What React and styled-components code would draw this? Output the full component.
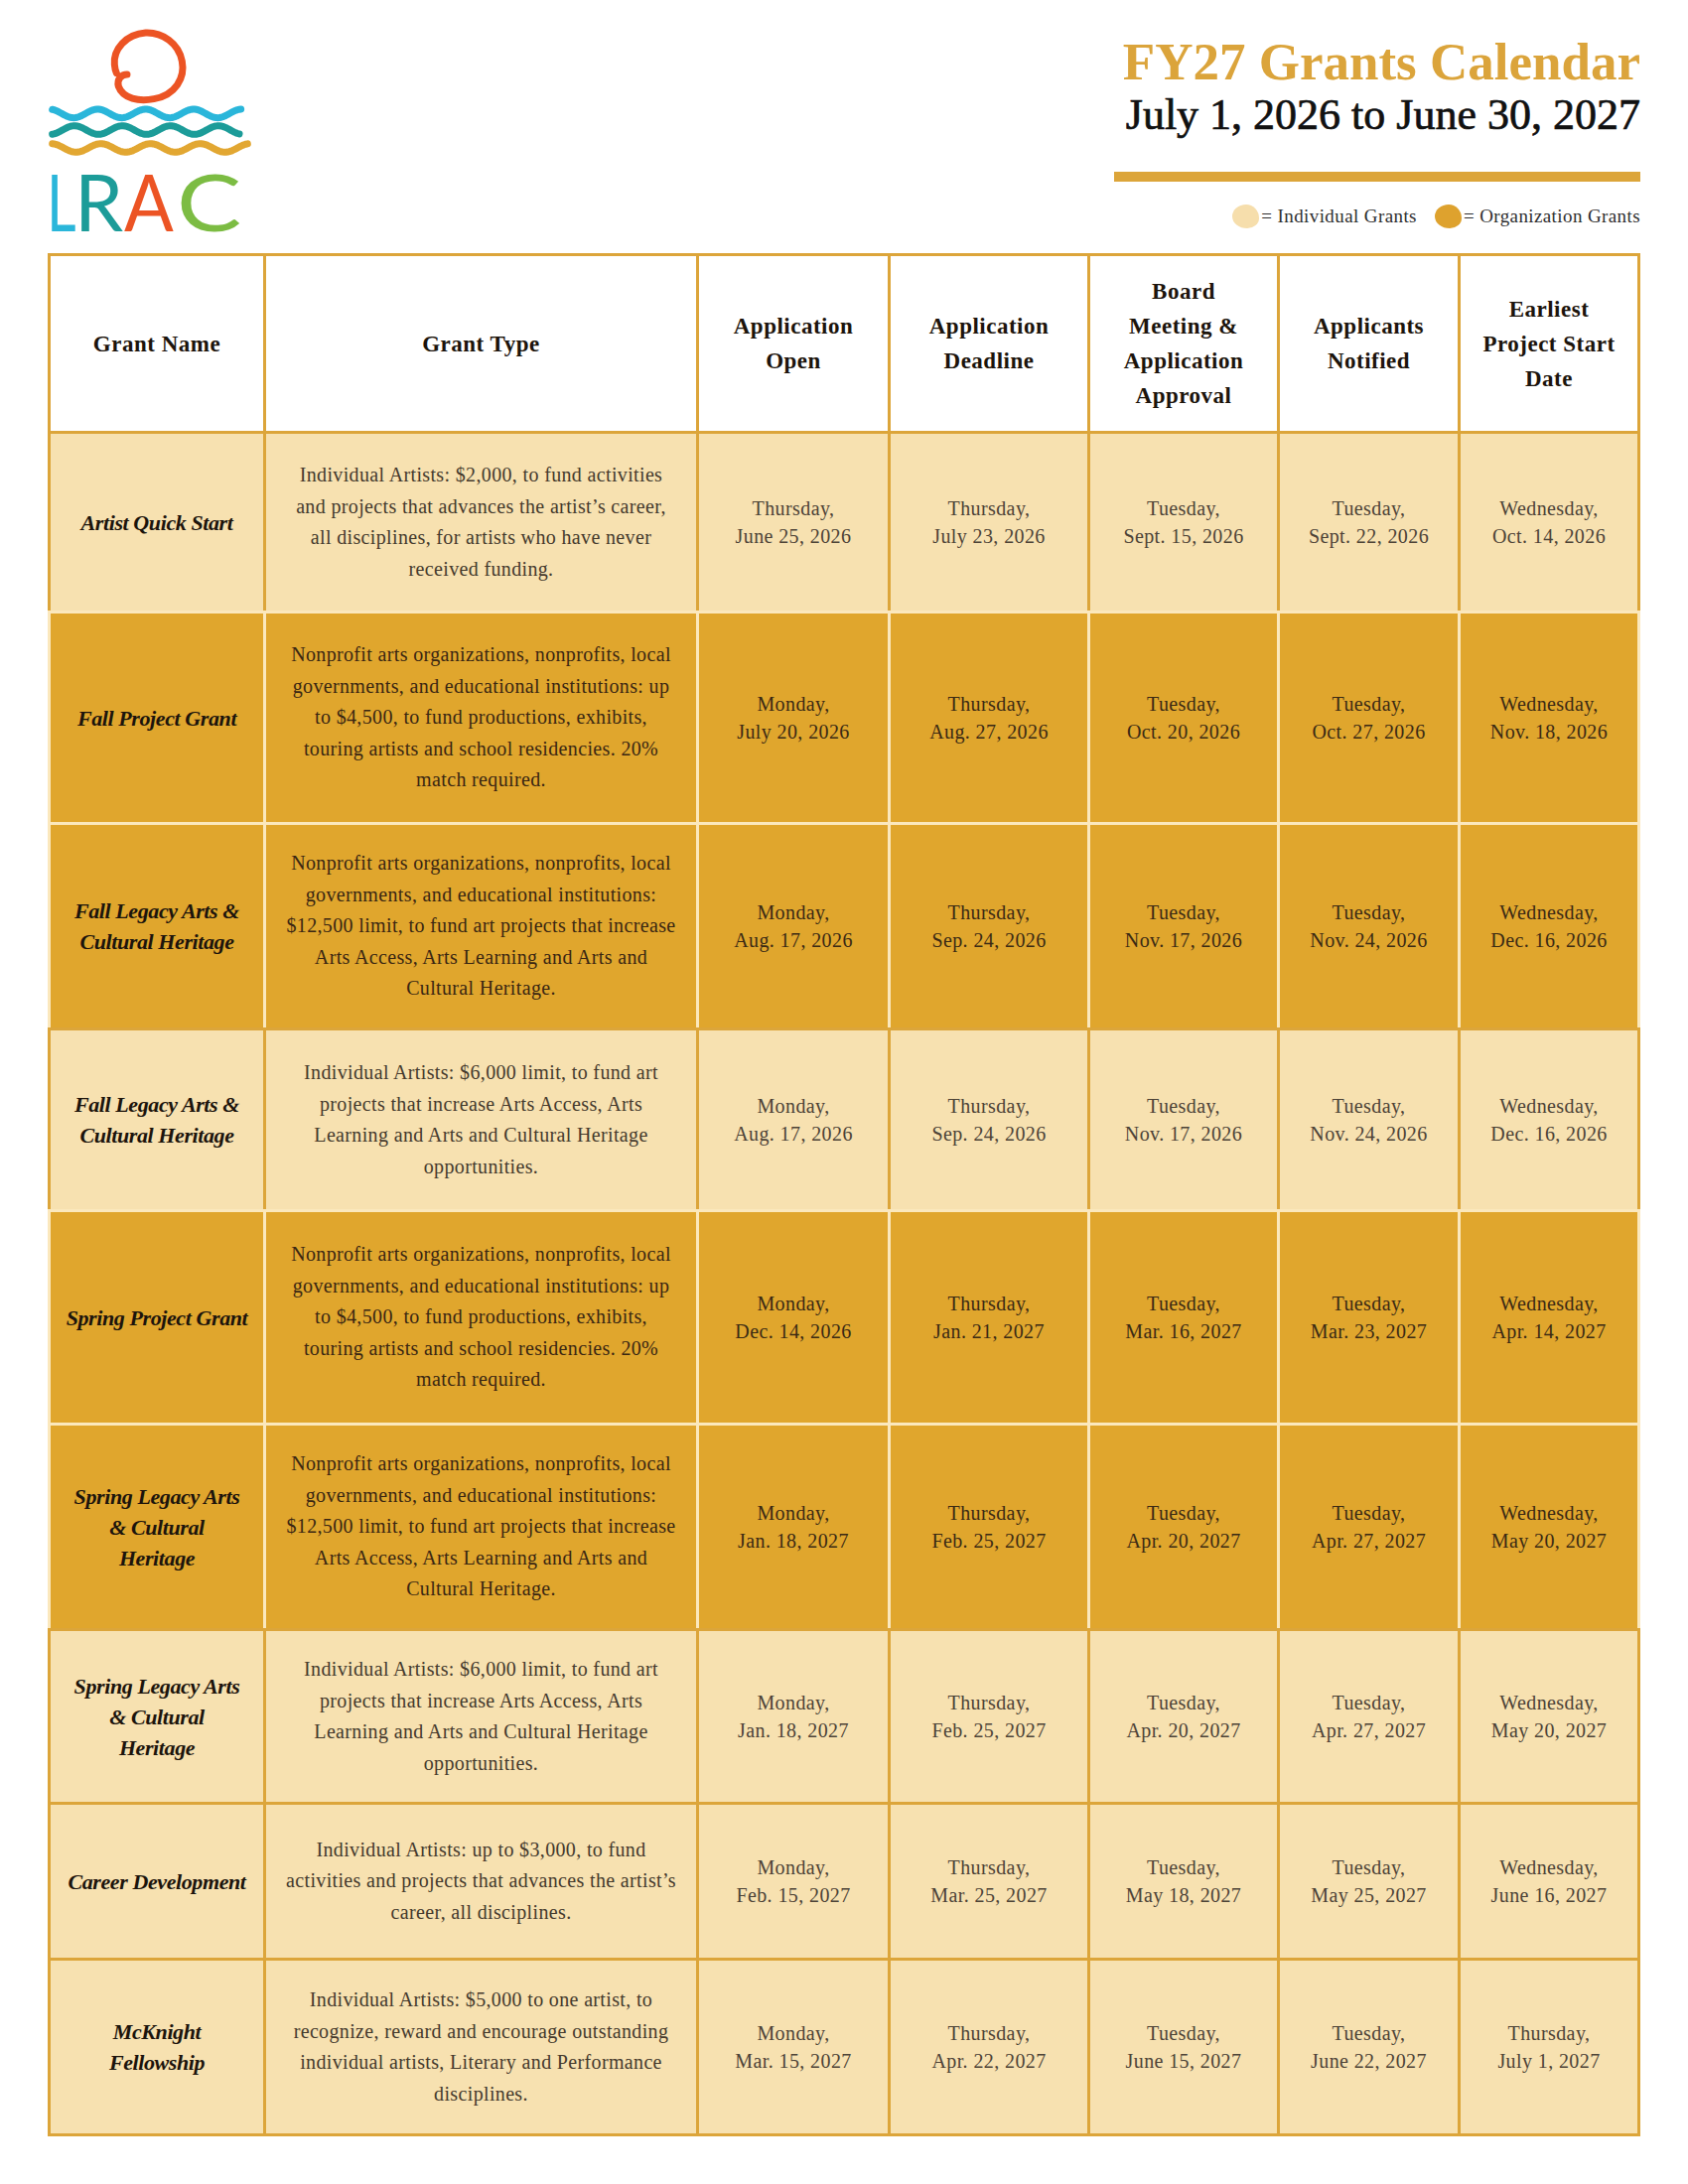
import React from 'react';
import styled, { createGlobalStyle } from 'styled-components';

const colours = {
	gold: '#dca53a',
	title: '#dba43b',
	light: '#f7e1b0',
	dark: '#e0a62d',
	cream: '#fbe8bd',
	ink: '#1c140c',
	body: '#453a2d',
	bodyDark: '#3a2612',
};

const GlobalStyle = createGlobalStyle`
	html, body {
		margin: 0;
		padding: 0;
		background: #ffffff;
	}
	body {
		font-family: 'Liberation Serif', 'DejaVu Serif', serif;
		color: ${colours.ink};
	}
`;

const Page = styled.div`
	width: 1700px;
	height: 2200px;
	box-sizing: border-box;
	padding: 0 48px;
	background: #ffffff;
`;

const Header = styled.header`
	display: flex;
	justify-content: space-between;
	align-items: flex-start;
	height: 245px;
`;

const LogoBox = styled.div`
	display: flex;
	flex-direction: column;
	width: 230px;
	margin: 25px 0 0 -8px;
`;

const LogoMark = styled.svg`
	display: block;
	width: 230px;
	height: 150px;
`;

const LogoWord = styled.div`
	margin: -2px 0 0 7px;
	font-family: Lato, 'Open Sans', sans-serif;
	font-size: 80px;
	line-height: 58px;
	font-weight: 400;
	white-space: nowrap;
`;

const Letter = styled.span`
	display: inline-block;
	width: ${p => p.$w}px;
	color: ${p => p.$c};
	transform: scaleX(${p => p.$sx});
	transform-origin: left center;
`;

const TitleBlock = styled.div`
	width: 530px;
	padding-top: 32px;
	display: flex;
	flex-direction: column;
	align-items: flex-end;
	text-align: right;
`;

const Title = styled.h1`
	margin: 0;
	font-size: 53px;
	line-height: 60px;
	font-weight: 700;
	color: ${colours.title};
	white-space: nowrap;
`;

const Period = styled.h2`
	margin: 0;
	font-size: 44px;
	line-height: 48px;
	font-weight: 400;
	color: #111111;
	white-space: nowrap;
	-webkit-text-stroke: 0.7px #111111;
`;

const Rule = styled.div`
	align-self: stretch;
	height: 10px;
	margin-top: 33px;
	background: ${colours.gold};
`;

const Legend = styled.div`
	display: flex;
	align-items: center;
	gap: 18px;
	margin-top: 23px;
	font-size: 19px;
	letter-spacing: 0.4px;
	color: #2f2f2f;
`;

const LegendItem = styled.div`
	display: flex;
	align-items: center;
	gap: 2px;
`;

const Blob = styled.span`
	display: inline-block;
	width: 27px;
	height: 24px;
	background: ${p => p.$tone};
	border-radius: 52% 48% 44% 56% / 50% 58% 42% 50%;
`;

const Table = styled.div`
	display: flex;
	flex-direction: column;
	margin-top: 10px;
`;

const Row = styled.div`
	display: grid;
	grid-template-columns: 217px 436px 193px 201px 191px 182px 184px;
	height: ${p => p.$h}px;
	background: ${p => p.$bg};
`;

const Cell = styled.div`
	box-sizing: border-box;
	display: flex;
	align-items: center;
	justify-content: center;
	text-align: center;
	padding: 0 6px;
	border-top: 3px solid ${p => p.$line};
	border-left: 3px solid ${p => p.$line};
	&:last-child {
		border-right: 3px solid ${p => p.$line};
	}
	${p => p.$last && `border-bottom: 3px solid ${p.$line};`}
`;

const HeadText = styled.div`
	font-size: 23px;
	line-height: 35px;
	font-weight: 700;
	letter-spacing: 0.5px;
	color: ${colours.ink};
	white-space: nowrap;
`;

const NameText = styled.div`
	font-size: 22px;
	line-height: 31px;
	font-weight: 700;
	font-style: italic;
	letter-spacing: -0.4px;
	color: ${colours.ink};
	white-space: nowrap;
`;

const TypeText = styled.div`
	font-size: 20px;
	line-height: 31.5px;
	letter-spacing: 0.35px;
	color: ${p => (p.$dark ? colours.bodyDark : colours.body)};
	white-space: nowrap;
`;

const DateText = styled.div`
	font-size: 20px;
	line-height: 28px;
	letter-spacing: 0.4px;
	color: ${p => (p.$dark ? '#3b2a14' : '#4d4337')};
	white-space: nowrap;
`;

const Lines = ({ lines }) =>
	lines.map((l, i) => (
		<React.Fragment key={i}>
			{i > 0 && <br />}
			{l}
		</React.Fragment>
	));

const wave = (x0, x1, y0, amp, period, crest) => {
	const pts = [];
	for (let x = x0; x <= x1; x += 5) {
		const y = y0 - amp * Math.cos(((x - crest) / period) * Math.PI * 2);
		pts.push(`${x.toFixed(1)} ${y.toFixed(1)}`);
	}
	return 'M' + pts.join(' L');
};

const Logo = () => (
	<LogoBox>
		<LogoMark viewBox="0 0 690 450">
			<path
				d="M264 150 C248 150 232 164 238 186 C252 224 300 232 345 224 C410 212 440 160 430 110 C420 55 370 22 320 24 C260 28 222 75 226 120 C227 132 229 140 232 146"
				fill="none"
				stroke="#ec5424"
				strokeWidth="21"
				strokeLinecap="round"
				strokeLinejoin="round"
			/>
			<path d={wave(38, 608, 268, 13, 145, 175)} fill="none" stroke="#2ab6da" strokeWidth="21" strokeLinecap="round" strokeLinejoin="round" />
			<path d={wave(38, 604, 318, 13, 145, 250)} fill="none" stroke="#1c9c99" strokeWidth="21" strokeLinecap="round" strokeLinejoin="round" />
			<path d={wave(38, 630, 372, 13, 150, 185)} fill="none" stroke="#e2a732" strokeWidth="21" strokeLinecap="round" strokeLinejoin="round" />
		</LogoMark>
		<LogoWord>
			<Letter $c="#2ab6da" $w={28} $sx={0.72}>L</Letter>
			<Letter $c="#1c9c99" $w={50} $sx={0.98}>R</Letter>
			<Letter $c="#ec5424" $w={53} $sx={0.92}>A</Letter>
			<Letter $c="#7cbc43" $w={66} $sx={1.22}>C</Letter>
		</LogoWord>
	</LogoBox>
);

const headers = [
	['Grant Name'],
	['Grant Type'],
	['Application', 'Open'],
	['Application', 'Deadline'],
	['Board', 'Meeting &', 'Application', 'Approval'],
	['Applicants', 'Notified'],
	['Earliest', 'Project Start', 'Date'],
];

const orgText = [
	'Nonprofit arts organizations, nonprofits, local',
	'governments, and educational institutions: up',
	'to $4,500, to fund productions, exhibits,',
	'touring artists and school residencies. 20%',
	'match required.',
];

const legacyOrgText = [
	'Nonprofit arts organizations, nonprofits, local',
	'governments, and educational institutions:',
	'$12,500 limit, to fund art projects that increase',
	'Arts Access, Arts Learning and Arts and',
	'Cultural Heritage.',
];

const legacyIndText = [
	'Individual Artists: $6,000 limit, to fund art',
	'projects that increase Arts Access, Arts',
	'Learning and Arts and Cultural Heritage',
	'opportunities.',
];

const fallLegacyDates = [
	['Monday,', 'Aug. 17, 2026'],
	['Thursday,', 'Sep. 24, 2026'],
	['Tuesday,', 'Nov. 17, 2026'],
	['Tuesday,', 'Nov. 24, 2026'],
	['Wednesday,', 'Dec. 16, 2026'],
];

const springLegacyDates = [
	['Monday,', 'Jan. 18, 2027'],
	['Thursday,', 'Feb. 25, 2027'],
	['Tuesday,', 'Apr. 20, 2027'],
	['Tuesday,', 'Apr. 27, 2027'],
	['Wednesday,', 'May 20, 2027'],
];

const grants = [
	{
		h: 181,
		org: false,
		name: ['Artist Quick Start'],
		type: [
			'Individual Artists: $2,000, to fund activities',
			'and projects that advances the artist’s career,',
			'all disciplines, for artists who have never',
			'received funding.',
		],
		dates: [
			['Thursday,', 'June 25, 2026'],
			['Thursday,', 'July 23, 2026'],
			['Tuesday,', 'Sept. 15, 2026'],
			['Tuesday,', 'Sept. 22, 2026'],
			['Wednesday,', 'Oct. 14, 2026'],
		],
	},
	{
		h: 213,
		org: true,
		name: ['Fall Project Grant'],
		type: orgText,
		dates: [
			['Monday,', 'July 20, 2026'],
			['Thursday,', 'Aug. 27, 2026'],
			['Tuesday,', 'Oct. 20, 2026'],
			['Tuesday,', 'Oct. 27, 2026'],
			['Wednesday,', 'Nov. 18, 2026'],
		],
	},
	{ h: 207, org: true, name: ['Fall Legacy Arts &', 'Cultural Heritage'], type: legacyOrgText, dates: fallLegacyDates },
	{ h: 183, org: false, name: ['Fall Legacy Arts &', 'Cultural Heritage'], type: legacyIndText, dates: fallLegacyDates },
	{
		h: 215,
		org: true,
		name: ['Spring Project Grant'],
		type: orgText,
		dates: [
			['Monday,', 'Dec. 14, 2026'],
			['Thursday,', 'Jan. 21, 2027'],
			['Tuesday,', 'Mar. 16, 2027'],
			['Tuesday,', 'Mar. 23, 2027'],
			['Wednesday,', 'Apr. 14, 2027'],
		],
	},
	{ h: 207, org: true, name: ['Spring Legacy Arts', '& Cultural', 'Heritage'], type: legacyOrgText, dates: springLegacyDates },
	{ h: 175, org: false, name: ['Spring Legacy Arts', '& Cultural', 'Heritage'], type: legacyIndText, dates: springLegacyDates },
	{
		h: 157,
		org: false,
		name: ['Career Development'],
		type: [
			'Individual Artists: up to $3,000, to fund',
			'activities and projects that advances the artist’s',
			'career, all disciplines.',
		],
		dates: [
			['Monday,', 'Feb. 15, 2027'],
			['Thursday,', 'Mar. 25, 2027'],
			['Tuesday,', 'May 18, 2027'],
			['Tuesday,', 'May 25, 2027'],
			['Wednesday,', 'June 16, 2027'],
		],
	},
	{
		h: 180,
		org: false,
		name: ['McKnight', 'Fellowship'],
		type: [
			'Individual Artists: $5,000 to one artist, to',
			'recognize, reward and encourage outstanding',
			'individual artists, Literary and Performance',
			'disciplines.',
		],
		dates: [
			['Monday,', 'Mar. 15, 2027'],
			['Thursday,', 'Apr. 22, 2027'],
			['Tuesday,', 'June 15, 2027'],
			['Tuesday,', 'June 22, 2027'],
			['Thursday,', 'July 1, 2027'],
		],
	},
];

const App = () => (
	<Page>
		<GlobalStyle />
		<Header>
			<Logo />
			<TitleBlock>
				<Title>FY27 Grants Calendar</Title>
				<Period>July 1, 2026 to June 30, 2027</Period>
				<Rule />
				<Legend>
					<LegendItem>
						<Blob $tone="#f6deac" />
						<span>= Individual Grants</span>
					</LegendItem>
					<LegendItem>
						<Blob $tone="#dea22e" />
						<span>= Organization Grants</span>
					</LegendItem>
				</Legend>
			</TitleBlock>
		</Header>

		<Table>
			<Row $h={179} $bg="#ffffff">
				{headers.map((h, i) => (
					<Cell key={i} $line={colours.gold}>
						<HeadText>
							<Lines lines={h} />
						</HeadText>
					</Cell>
				))}
			</Row>
			{grants.map((g, r) => {
				const line = g.org ? colours.cream : colours.gold;
				const last = r === grants.length - 1;
				return (
					<Row key={r} $h={g.h} $bg={g.org ? colours.dark : colours.light}>
						<Cell $line={line} $last={last}>
							<NameText>
								<Lines lines={g.name} />
							</NameText>
						</Cell>
						<Cell $line={line} $last={last}>
							<TypeText $dark={g.org}>
								<Lines lines={g.type} />
							</TypeText>
						</Cell>
						{g.dates.map((d, i) => (
							<Cell key={i} $line={line} $last={last}>
								<DateText $dark={g.org}>
									<Lines lines={d} />
								</DateText>
							</Cell>
						))}
					</Row>
				);
			})}
		</Table>
	</Page>
);

export default App;
